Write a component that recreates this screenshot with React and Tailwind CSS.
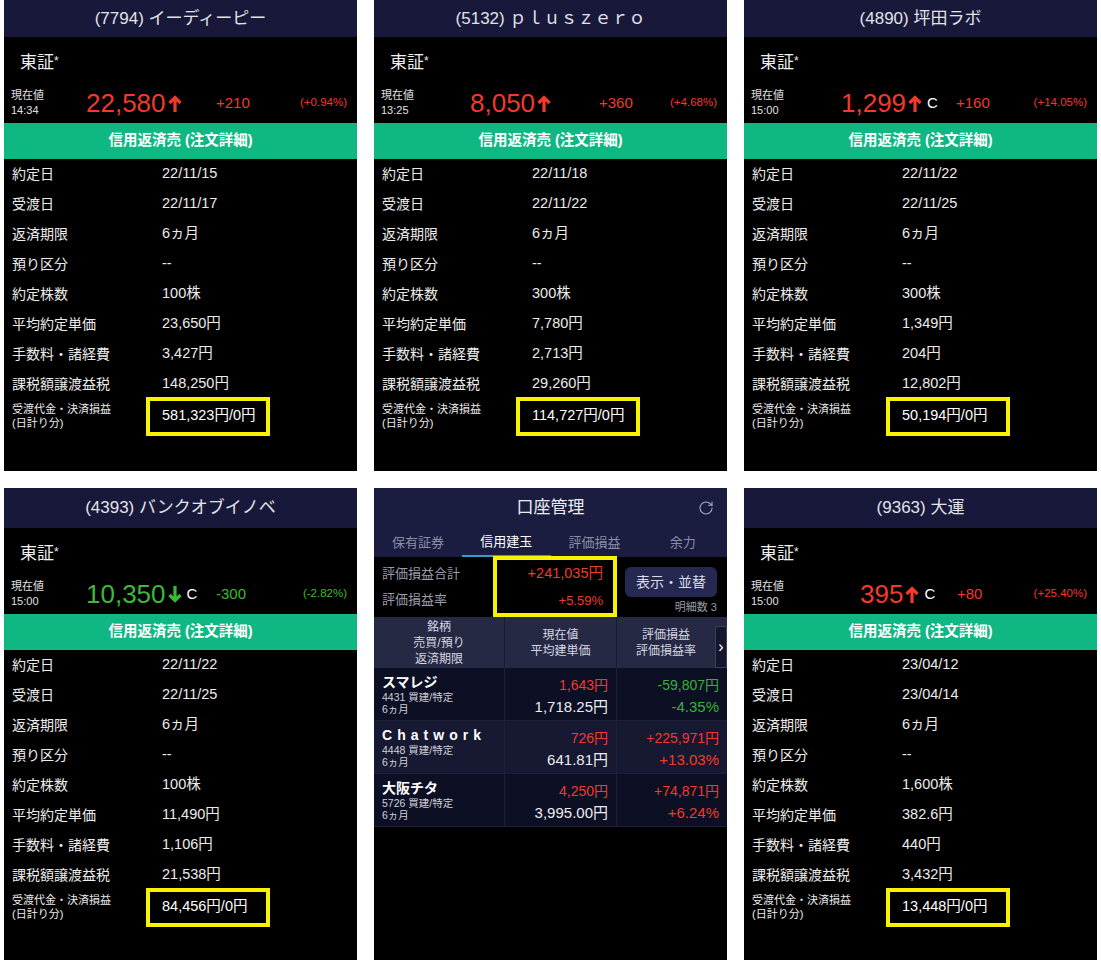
import { RotateCw } from 'lucide-react';

const FONT = { fontFamily: '"Liberation Sans", "Noto Sans CJK JP", sans-serif' };

const LABELS = ['約定日', '受渡日', '返済期限', '預り区分', '約定株数', '平均約定単価', '手数料・諸経費', '課税額譲渡益税'];

const stocks = [
    {
        title: '(7794) イーディーピー', time: '14:34', price: '22,580', up: true, close: false,
        change: '+210', pct: '(+0.94%)', pricePad: 'pl-0', changePad: 'pl-0',
        values: ['22/11/15', '22/11/17', '6ヵ月', '--', '100株', '23,650円', '3,427円', '148,250円'],
        total: '581,323円/0円',
    },
    {
        title: '(5132) ｐｌｕｓｚｅｒｏ', time: '13:25', price: '8,050', up: true, close: false,
        change: '+360', pct: '(+4.68%)', pricePad: 'pl-[14px]', changePad: 'pl-[13px]',
        values: ['22/11/18', '22/11/22', '6ヵ月', '--', '300株', '7,780円', '2,713円', '29,260円'],
        total: '114,727円/0円',
    },
    {
        title: '(4890) 坪田ラボ', time: '15:00', price: '1,299', up: true, close: true,
        change: '+160', pct: '(+14.05%)', pricePad: 'pl-[15px]', changePad: 'pl-0',
        values: ['22/11/22', '22/11/25', '6ヵ月', '--', '300株', '1,349円', '204円', '12,802円'],
        total: '50,194円/0円',
    },
    {
        title: '(4393) バンクオブイノベ', time: '15:00', price: '10,350', up: false, close: true,
        change: '-300', pct: '(-2.82%)', pricePad: 'pl-0', changePad: 'pl-0',
        values: ['22/11/22', '22/11/25', '6ヵ月', '--', '100株', '11,490円', '1,106円', '21,538円'],
        total: '84,456円/0円',
    },
    {
        title: '(9363) 大運', time: '15:00', price: '395', up: true, close: true,
        change: '+80', pct: '(+25.40%)', pricePad: 'pl-[34px]', changePad: 'pl-px',
        values: ['23/04/12', '23/04/14', '6ヵ月', '--', '1,600株', '382.6円', '440円', '3,432円'],
        total: '13,448円/0円',
    },
];

function Arrow({ up, color }) {
    return (
        <svg width="14" height="17" viewBox="0 0 14 17" className="ml-[2px]">
            {up ? (
                <path d="M7 17V2.5M1.5 8L7 2.5L12.5 8" stroke={color} strokeWidth="3.2" fill="none" />
            ) : (
                <path d="M7 0V14.5M1.5 9L7 14.5L12.5 9" stroke={color} strokeWidth="3.2" fill="none" />
            )}
        </svg>
    );
}

function StockPanel({ s, first }) {
    const color = s.up ? '#f2392c' : '#3db83a';
    return (
        <div className={`flex flex-col bg-black ${first ? 'h-[471px]' : 'h-[472px]'}`}>
            <div className={`flex items-center justify-center bg-[#18183a] text-[17px] text-[#e2e2e8] ${first ? 'h-[37px]' : 'h-[40px]'}`}>
                {s.title}
            </div>
            <div className="flex h-[46px] items-center pl-[16px] pt-[6px] text-[17px] text-[#f0f0f0]">
                東証<span className="self-start mt-[9px] text-[12px]">*</span>
            </div>
            <div className="flex h-[40px] items-center">
                <div className="w-[82px] pl-[7px] text-[11px] leading-[15px] text-[#e0e0e0]">
                    <div>現在値</div>
                    <div>{s.time}</div>
                </div>
                <div className={`flex w-[130px] items-center ${s.pricePad}`}>
                    <span className="text-[26px] leading-none" style={{ color }}>{s.price}</span>
                    <Arrow up={s.up} color={color} />
                    {s.close && <span className="ml-[5px] text-[15px] text-white">C</span>}
                </div>
                <div className={`flex-1 text-[15px] ${s.changePad}`} style={{ color }}>{s.change}</div>
                <div className="pr-[10px] text-[11.5px]" style={{ color }}>{s.pct}</div>
            </div>
            <div className="flex h-[36px] items-center justify-center bg-[#0fb783] text-[14.5px] font-bold text-white">
                信用返済売 (注文詳細)
            </div>
            <div className="flex flex-col">
                {LABELS.map((label, i) => (
                    <div key={label} className="flex h-[30px] items-center text-[14px] text-[#ececec]">
                        <div className="w-[158px] pl-[8px]">{label}</div>
                        <div className="text-[14.5px]">{s.values[i]}</div>
                    </div>
                ))}
                <div className="flex h-[34px] items-center">
                    <div className="w-[142px] pl-[8px] text-[11px] leading-[14px] text-[#ececec]">
                        <div>受渡代金・決済損益</div>
                        <div>(日計り分)</div>
                    </div>
                    <div className="flex h-[39px] w-[124px] items-center border-[4px] border-[#f7f200] pl-[12px] text-[14.5px] text-white">
                        {s.total}
                    </div>
                </div>
            </div>
        </div>
    );
}

const positions = [
    { name: 'スマレジ', code: '4431 買建/特定', price: '1,643円', avg: '1,718.25円', pl: '-59,807円', rate: '-4.35%', gain: false, bg: 'bg-[#0d0f24]' },
    { name: 'Chatwork', code: '4448 買建/特定', price: '726円', avg: '641.81円', pl: '+225,971円', rate: '+13.03%', gain: true, bg: 'bg-[#161931]', wide: true },
    { name: '大阪チタ', code: '5726 買建/特定', price: '4,250円', avg: '3,995.00円', pl: '+74,871円', rate: '+6.24%', gain: true, bg: 'bg-[#0d0f24]' },
];

function AccountPanel() {
    const tabs = ['保有証券', '信用建玉', '評価損益', '余力'];
    return (
        <div className="flex h-[472px] flex-col bg-black">
            <div className="bg-[#1b1d40]">
                <div className="relative flex h-[40px] items-center justify-center text-[17px] text-[#ececf2]">
                    口座管理
                    <RotateCw className="absolute right-[13px] top-[12px] h-[16px] w-[16px] text-[#a9abbd]" strokeWidth={1.6} />
                </div>
                <div className="grid h-[29px] grid-cols-4">
                    {tabs.map((t, i) => (
                        <div
                            key={t}
                            className={`flex items-center justify-center text-[13px] ${i === 1 ? 'border-b-2 border-[#2a9fd8] text-white' : 'text-[#8c8ea8]'}`}
                        >
                            {t}
                        </div>
                    ))}
                </div>
            </div>
            <div className="flex h-[60px] items-stretch">
                <div className="flex w-[119px] flex-col justify-around pl-[8px] py-[4px] text-[13px] text-[#9a9bab]">
                    <div>評価損益合計</div>
                    <div>評価損益率</div>
                </div>
                <div className="-mt-px flex w-[124px] flex-col items-end justify-around border-[4px] border-[#f7f200] pr-[10px] text-[#f2392c]">
                    <div className="text-[14.5px]">+241,035円</div>
                    <div className="text-[13px]">+5.59%</div>
                </div>
                <div className="flex flex-1 flex-col items-end pr-[10px] pt-[10px]">
                    <div className="flex h-[30px] w-[92px] items-center justify-center rounded-md bg-[#252850] text-[14px] text-[#dcdcea]">
                        表示・並替
                    </div>
                    <div className="mt-[2px] text-[11px] text-[#9a9bab]">明細数 3</div>
                </div>
            </div>
            <div className="flex h-[51px] bg-[#262944] text-[12px] leading-[16px] text-[#d6d7e2]">
                <div className="flex w-[131px] flex-col items-center justify-center border-r border-[#1a1c33]">
                    <div>銘柄</div>
                    <div>売買/預り</div>
                    <div>返済期限</div>
                </div>
                <div className="flex w-[112px] flex-col items-center justify-center border-r border-[#1a1c33]">
                    <div>現在値</div>
                    <div>平均建単価</div>
                </div>
                <div className="flex w-[98px] flex-col items-center justify-center">
                    <div>評価損益</div>
                    <div>評価損益率</div>
                </div>
                <div className="flex flex-1 items-end">
                    <div className="flex h-[42px] w-[12px] items-center justify-center rounded-tl-[3px] border border-[#3c3f5c] bg-[#14162c] text-[16px] text-white">
                        ›
                    </div>
                </div>
            </div>
            {positions.map((p) => {
                const plColor = p.gain ? 'text-[#f2392c]' : 'text-[#36b336]';
                return (
                    <div key={p.name} className={`flex h-[53px] border-b border-[#1c1f38] ${p.bg}`}>
                        <div className="flex w-[131px] flex-col justify-center border-r border-[#1c1f38] pl-[8px] text-white">
                            <div className={`text-[14px] font-bold leading-[17px] ${p.wide ? 'tracking-[0.36em]' : ''}`}>{p.name}</div>
                            <div className="text-[10.5px] leading-[12px] text-[#d0d0d8]">{p.code}</div>
                            <div className="text-[10.5px] leading-[12px] text-[#d0d0d8]">6ヵ月</div>
                        </div>
                        <div className="flex w-[112px] flex-col items-end justify-center border-r border-[#1c1f38] pr-[8px] pt-[3px] leading-[21px]">
                            <div className="text-[14px] text-[#f2392c]">{p.price}</div>
                            <div className="text-[15px] text-[#ececf0]">{p.avg}</div>
                        </div>
                        <div className={`flex flex-1 flex-col items-end justify-center pr-[8px] pt-[3px] leading-[21px] ${plColor}`}>
                            <div className="text-[14px]">{p.pl}</div>
                            <div className="text-[15px]">{p.rate}</div>
                        </div>
                    </div>
                );
            })}
        </div>
    );
}

export default function App() {
    return (
        <div className="h-[970px] w-[1101px] bg-white px-[4px]" style={FONT}>
            <div className="grid grid-cols-3 gap-x-[17px] gap-y-[17px]">
                <StockPanel s={stocks[0]} first />
                <StockPanel s={stocks[1]} first />
                <StockPanel s={stocks[2]} first />
                <StockPanel s={stocks[3]} />
                <AccountPanel />
                <StockPanel s={stocks[4]} />
            </div>
        </div>
    );
}
